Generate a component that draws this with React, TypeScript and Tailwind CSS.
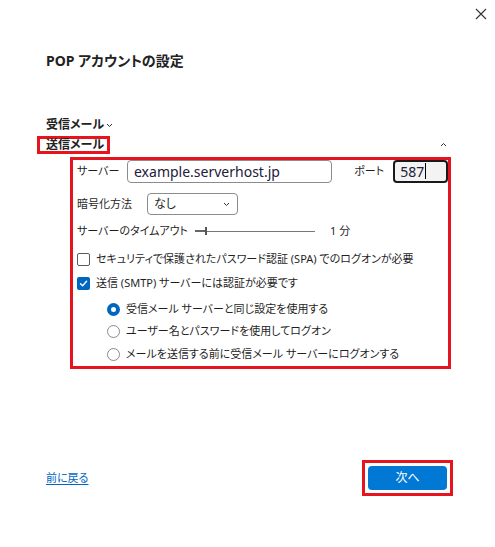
import React from "react";

const font = "font-['Noto_Sans','Noto_Sans_CJK_JP',sans-serif] [font-feature-settings:'palt']";

function Checkbox({ checked }: { checked?: boolean }) {
  return checked ? (
    <span className="w-[13px] h-[13px] rounded-[2px] bg-[#0067c0] flex items-center justify-center shrink-0">
      <svg width="9" height="9" viewBox="0 0 9 9" fill="none">
        <path d="M1.5 4.8 L3.6 6.8 L7.6 2.3" stroke="white" strokeWidth="1.4" strokeLinecap="round" strokeLinejoin="round" />
      </svg>
    </span>
  ) : (
    <span className="w-[13px] h-[13px] rounded-[2px] border border-[#5a5a5a] bg-white shrink-0" />
  );
}

function Radio({ checked }: { checked?: boolean }) {
  return checked ? (
    <span className="w-[13px] h-[13px] rounded-full border-[4px] border-[#0067c0] bg-white shrink-0" />
  ) : (
    <span className="w-[13px] h-[13px] rounded-full border border-[#8a8a8a] bg-white shrink-0" />
  );
}

export default function App() {
  return (
    <div className={`relative w-[495px] h-[547px] bg-white overflow-hidden flex flex-col text-[#1f1f1f] whitespace-nowrap ${font}`}>
      <div className="pointer-events-none absolute -inset-[5px] rounded-[11px] border-2 border-[#3b8fe4]" />

      <div className="h-[20px] mt-[6px] flex justify-end pr-[8px]">
        <svg width="12" height="12" viewBox="0 0 12 12" className="mt-[2px]">
          <path d="M1 1 L11 11 M11 1 L1 11" stroke="#333" strokeWidth="1.1" />
        </svg>
      </div>

      <div className="pl-[46px] mt-[22px] h-[24px] flex items-center text-[14px] font-bold text-[#222]">
        POP アカウントの設定
      </div>

      <div className="pl-[46px] mt-[44px] h-[18px] flex items-center text-[12px] font-bold text-[#222]">
        受信メール
        <svg width="7" height="5" viewBox="0 0 7 5" className="ml-[2px]">
          <path d="M1 1 L3.5 3.5 L6 1" stroke="#333" strokeWidth="1" fill="none" />
        </svg>
      </div>

      <div className="mt-[2px] flex items-center pl-[37px] pr-[48px]">
        <div className="border-[3px] border-[#e5141f] h-[18px] pl-[6px] pr-[3px] flex items-center text-[12px] font-bold text-[#222] leading-none">
          送信メール
        </div>
        <div className="ml-auto -mt-[2px]">
          <svg width="7" height="5" viewBox="0 0 7 5">
            <path d="M1 4 L3.5 1.5 L6 4" stroke="#333" strokeWidth="1" fill="none" />
          </svg>
        </div>
      </div>

      <div className="ml-[70px] mt-[3px] w-[381px] h-[212px] border-[3px] border-[#e5141f] pl-[4px] text-[11px]">
        <div className="flex items-center h-[22px]">
          <span className="w-[50px] shrink-0">サーバー</span>
          <div className="w-[206px] h-[23px] border border-[#8c8c8c] rounded-[4px] flex items-center pl-[6px] text-[14px] text-[#20203a]">
            example.serverhost.jp
          </div>
          <span className="ml-[22px] w-[39px] shrink-0">ポート</span>
          <div className="w-[55px] h-[23px] border-2 border-[#1a1a1a] rounded-[4px] bg-[#f3f3f3] flex items-center pl-[5px] text-[14px] text-[#20203a]">
            587<span className="w-px h-[16px] bg-black ml-[1px]" />
          </div>
        </div>

        <div className="flex items-center h-[22px] mt-[11px]">
          <span className="w-[70px] shrink-0">暗号化方法</span>
          <div className="w-[91px] h-[22px] border border-[#8c8c8c] rounded-[4px] flex items-center px-[6px] text-[12px]">
            なし
            <svg width="7" height="5" viewBox="0 0 7 5" className="ml-auto mr-[1px]">
              <path d="M1 1 L3.5 3.5 L6 1" stroke="#333" strokeWidth="1" fill="none" />
            </svg>
          </div>
        </div>

        <div className="flex items-center h-[16px] mt-[8px]">
          <span className="w-[118px] shrink-0">サーバーのタイムアウト</span>
          <div className="relative w-[120px] h-[8px] flex items-center shrink-0">
            <div className="absolute left-0 right-0 h-px bg-[#777]" />
            <div className="absolute left-0 w-[10px] h-[2px] bg-[#666]" />
            <div className="absolute left-[10px] w-[2px] h-[8px] bg-[#555]" />
          </div>
          <span className="ml-[15px]">1 分</span>
        </div>

        <div className="flex items-center gap-[6px] h-[18px] mt-[11px]">
          <Checkbox />
          <span>セキュリティで保護されたパスワード認証 (SPA) でのログオンが必要</span>
        </div>
        <div className="flex items-center gap-[6px] h-[18px] mt-[6px]">
          <Checkbox checked />
          <span>送信 (SMTP) サーバーには認証が必要です</span>
        </div>

        <div className="pl-[30px]">
          <div className="flex items-center gap-[6px] h-[18px] mt-[8px]">
            <Radio checked />
            <span>受信メール サーバーと同じ設定を使用する</span>
          </div>
          <div className="flex items-center gap-[6px] h-[18px] mt-[4px]">
            <Radio />
            <span>ユーザー名とパスワードを使用してログオン</span>
          </div>
          <div className="flex items-center gap-[6px] h-[18px] mt-[5px]">
            <Radio />
            <span>メールを送信する前に受信メール サーバーにログオンする</span>
          </div>
        </div>
      </div>

      <div className="mt-auto mb-[51px] flex items-center justify-between pl-[46px] pr-[42px]">
        <a className="text-[11px] text-[#0067c0] underline underline-offset-2">前に戻る</a>
        <div className="border-[3px] border-[#e5141f] p-[3px]">
          <div className="w-[79px] h-[24px] rounded-[4px] bg-[#0078d4] text-white text-[12px] flex items-center justify-center">
            次へ
          </div>
        </div>
      </div>
    </div>
  );
}
